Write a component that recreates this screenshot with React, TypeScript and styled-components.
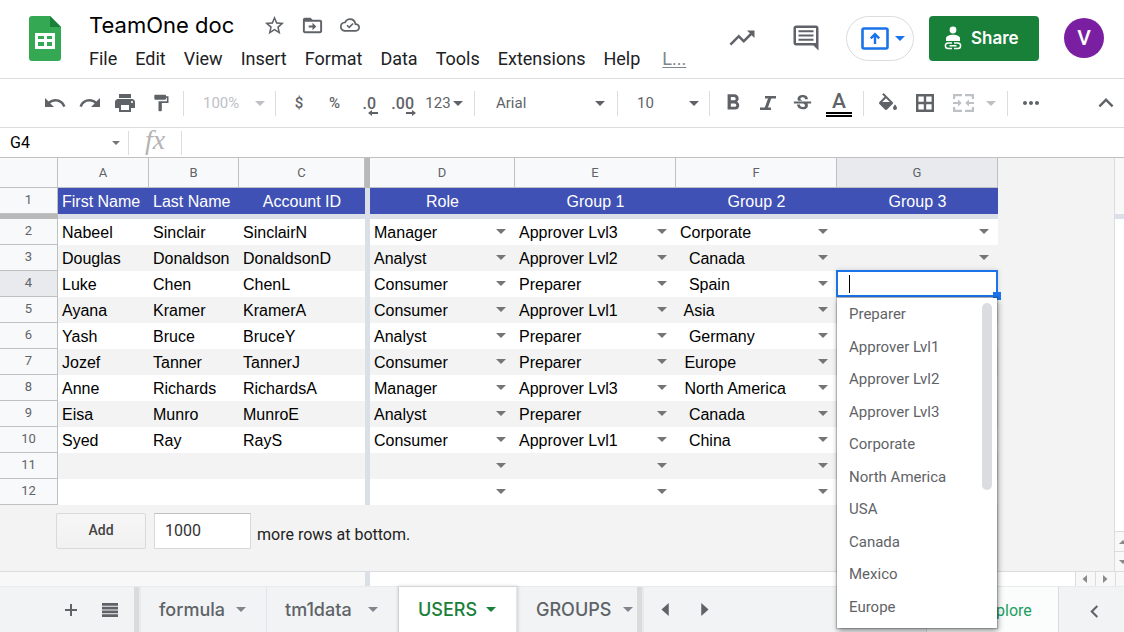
import React from 'react';
import styled, { createGlobalStyle } from 'styled-components';
import {
  MdUndo, MdRedo, MdPrint, MdFormatPaint, MdStarBorder, MdFormatBold, MdStrikethroughS,
  MdBorderAll, MdMoreHoriz, MdExpandLess, MdChevronLeft, MdTrendingUp, MdExplore,
} from 'react-icons/md';

const roboto = "Roboto, 'Liberation Sans', sans-serif";
const brand = "Inter, Roboto, sans-serif";
const cellFont = "'Liberation Sans', Arial, sans-serif";
const grey = '#5f6368';
const line = '#dadce0';
const gridLine = '#c0c0c0';
const freeze = '#dadfe8';

const GlobalStyle = createGlobalStyle`
  * { box-sizing: border-box; }
  body { margin: 0; background: #fff; font-family: ${roboto}; color: #202124; }
  button, input, select { font-family: inherit; color: inherit; border: 0; padding: 0; margin: 0; background: none; outline: none; }
  svg { display: block; flex: none; }
`;

const Page = styled.div`
  min-height: 100vh;
  display: flex;
  flex-direction: column;
  overflow: hidden;
`;

const Triangle = styled.span<{ $size?: number; $color?: string }>`
  flex: none;
  width: 0;
  height: 0;
  border: ${p => p.$size ?? 5}px solid transparent;
  border-top-color: ${p => p.$color ?? grey};
  border-bottom: 0;
`;

/* Header */
const Header = styled.header`
  display: flex;
  height: 79px;
  padding: 0 20px 0 29px;
  border-bottom: 1px solid ${line};
`;
const Logo = styled.a`
  margin: 16px 28px 0 0;
`;
const TitleBlock = styled.div`
  flex: 1;
  padding-top: 10px;
  min-width: 0;
`;
const TitleRow = styled.div`
  display: flex;
  align-items: center;
  height: 30px;
`;
const DocTitle = styled.h1`
  margin: 0 21px 0 0;
  font: 400 22px/30px ${brand};
  color: #000;
  white-space: nowrap;
`;
const TitleButton = styled.button`
  width: 38px;
  height: 30px;
  display: grid;
  place-items: center;
  color: ${grey};
`;
const MenuRow = styled.nav`
  display: flex;
  gap: 18px;
  align-items: center;
  padding-top: 7px;
`;
const MenuButton = styled.button`
  font-size: 18px;
  line-height: 24px;
`;
const LastEdit = styled.a`
  margin-left: 4px;
  font-size: 18px;
  line-height: 24px;
  color: #80868b;
  text-decoration: underline;
  text-underline-offset: 2px;
`;
const HeaderActions = styled.div`
  display: flex;
  align-items: center;
  height: 76px;
`;
const HeaderIcon = styled.button`
  width: 64px;
  height: 40px;
  display: grid;
  place-items: center;
  color: ${grey};
`;
const Present = styled.button`
  display: flex;
  align-items: center;
  gap: 6px;
  width: 68px;
  height: 45px;
  margin: 0 15px 0 8px;
  padding-left: 14px;
  border: 1px solid ${line};
  border-radius: 23px;
`;
const Share = styled.button`
  display: flex;
  align-items: center;
  gap: 9px;
  width: 110px;
  height: 45px;
  padding-left: 15px;
  border-radius: 4px;
  background: #188038;
  color: #fff;
  font: 600 17px/24px ${brand};
`;
const Avatar = styled.button`
  width: 40px;
  height: 40px;
  margin-left: 25px;
  border-radius: 50%;
  background: #7b1fa2;
  color: #fff;
  font-size: 21px;
  font-weight: 500;
  line-height: 40px;
`;

/* Toolbar */
const Toolbar = styled.div`
  display: flex;
  align-items: center;
  height: 49px;
  padding-left: 37px;
  border-bottom: 1px solid ${line};
  color: ${grey};
  font-size: 15px;
`;
const Separator = styled.span`
  flex: none;
  width: 1px;
  height: 25px;
  margin: 0 5px;
  background: ${line};
`;
const Tool = styled.button<{ $width?: number; $muted?: boolean }>`
  position: relative;
  flex: none;
  display: flex;
  align-items: center;
  justify-content: center;
  width: ${p => p.$width ?? 35}px;
  height: 34px;
  font-size: 15px;
  font-weight: 500;
  color: ${p => (p.$muted ? '#bdc1c6' : 'inherit')};
`;
const FormatTool = styled(Tool)`
  gap: 2px;
  padding-right: 3px;
  font-weight: 400;
`;
const DecimalTool = styled(Tool)`
  justify-content: flex-end;
  padding-right: 8px;
  font-size: 16px;
`;
const PaintTool = styled(Tool)`
  padding-left: 2px;
`;
const MergeTool = styled(Tool)`
  gap: 12px;
  padding-left: 3px;
`;
const DecimalArrow = styled.svg`
  position: absolute;
  right: 6px;
  bottom: 4px;
`;
const ColorLetter = styled.span`
  display: flex;
  flex-direction: column;
  align-items: center;
  width: 26px;
  padding-top: 1px;
  font-size: 21px;
  line-height: 22px;
  &::after {
    content: '';
    width: 26px;
    height: 1px;
    border-top: 2px solid #000;
    border-bottom: 2px solid #000;
  }
`;
const SelectWrap = styled.label<{ $width: number; $muted?: boolean }>`
  flex: none;
  display: flex;
  align-items: center;
  width: ${p => p.$width}px;
  padding: 0 5px 0 14px;
  color: ${p => (p.$muted ? '#bdc1c6' : '#5f6368')};
`;
const FontSelectWrap = styled(SelectWrap)`
  padding: 0 7px 0 16px;
`;
const SelectBox = styled.select`
  flex: 1;
  min-width: 0;
  appearance: none;
  height: 30px;
  font-size: 15px;
`;
const Spacer = styled.span`
  flex: 1;
`;

/* Formula bar */
const FormulaBar = styled.div`
  display: flex;
  align-items: center;
  height: 30px;
  border-bottom: 1px solid ${gridLine};
`;
const NameBox = styled.label`
  display: flex;
  align-items: center;
  width: 129px;
  height: 24px;
  padding: 0 8px 0 10px;
  border-right: 1px solid ${line};
`;
const NameInput = styled.input`
  flex: 1;
  min-width: 0;
  font-size: 16px;
  color: #000;
`;
const Fx = styled.span`
  width: 53px;
  height: 24px;
  border-right: 1px solid ${line};
  text-align: center;
  font: italic 28px/18px 'Liberation Serif', serif;
  color: #b4b4b4;
`;
const FormulaInput = styled.input`
  flex: 1;
  height: 24px;
  padding: 0 8px;
  font-size: 16px;
`;

/* Sheet */
const SheetArea = styled.main`
  flex: 1;
  display: flex;
  background: #f3f3f3;
`;
const GridPane = styled.div`
  flex: 1;
  min-width: 0;
`;
const Grid = styled.table`
  table-layout: fixed;
  width: 998px;
  border-collapse: separate;
  border-spacing: 0;
`;
const Head = styled.th<{ $active?: boolean; $row?: boolean }>`
  padding: ${p => (p.$row ? '0 0 1px' : '0')};
  height: ${p => (p.$row ? 26 : 30)}px;
  border-right: 1px solid ${gridLine};
  border-bottom: 1px solid ${gridLine};
  background: ${p => (p.$active ? '#e8eaed' : '#f8f9fa')};
  color: ${grey};
  font: 400 13px/${p => (p.$row ? 24 : 29)}px ${roboto};
  text-align: center;
`;
const FreezeCell = styled.td<{ $dark?: boolean }>`
  padding: 0;
  height: 5px;
  background: ${p => (p.$dark ? '#b9b9b9' : freeze)};
`;
const TitleCell = styled.td<{ $left?: boolean }>`
  padding: 2px 4px 0;
  height: 26px;
  background: #3f51b5;
  color: #fff;
  font: 16px/24px ${cellFont};
  text-align: ${p => (p.$left ? 'left' : 'center')};
  white-space: nowrap;
`;
const Cell = styled.td<{ $band?: boolean }>`
  position: relative;
  padding: 0;
  height: 26px;
  background: ${p => (p.$band ? '#f3f3f3' : '#fff')};
  color: #000;
  font: 16px/24px ${cellFont};
  white-space: pre;
`;
const CellBody = styled.div`
  display: flex;
  justify-content: space-between;
  height: 26px;
  padding: 2px 9px 0 4px;
`;
const CellMenu = styled.button`
  display: flex;
  align-items: center;
  height: 20px;
`;

/* Cell editor and its list */
const Editor = styled.div`
  position: absolute;
  z-index: 10;
  top: -1px;
  left: -1px;
  right: 0;
  height: 27px;
  display: flex;
  align-items: center;
  padding-left: 11px;
  border: 2px solid #1a73e8;
  background: #fff;
  box-shadow: 0 0 5px rgba(0, 0, 0, 0.15);
`;
const Caret = styled.span`
  width: 1px;
  height: 18px;
  background: #000;
`;
const EditorInput = styled.input`
  flex: 1;
  min-width: 0;
  font-size: 16px;
`;
const FillHandle = styled.span`
  position: absolute;
  right: -5px;
  bottom: -5px;
  width: 8px;
  height: 8px;
  background: #1a73e8;
`;
const Popup = styled.div`
  position: absolute;
  z-index: 11;
  top: 27px;
  left: 0;
  right: 1px;
  display: flex;
  padding: 0 5px 5px 0;
  background: #fff;
  box-shadow: 0 0 1px 1px rgba(0, 0, 0, 0.2), 1px 3px 6px rgba(0, 0, 0, 0.4);
`;
const Options = styled.ul`
  flex: 1;
  display: grid;
  grid-auto-rows: 1fr;
  height: 325px;
  margin: 0;
  padding: 0;
  list-style: none;
`;
const Option = styled.li`
  display: flex;
  align-items: center;
  padding-left: 12px;
  color: ${grey};
  font: 15px/20px ${roboto};
`;
const PopupThumb = styled.span`
  width: 10px;
  height: 187px;
  margin-top: 5px;
  border-radius: 5px;
  background: #dadce0;
`;

const AddRows = styled.form`
  display: flex;
  align-items: center;
  gap: 8px;
  padding: 8px 0 22px 56px;
`;
const AddButton = styled.button`
  width: 90px;
  height: 36px;
  padding-bottom: 2px;
  border: 1px solid #d9d9d9;
  border-radius: 2px;
  background: linear-gradient(#f6f6f6, #f1f1f1);
  color: #444;
  font-size: 14px;
  font-weight: 500;
`;
const CountInput = styled.input`
  width: 97px;
  height: 36px;
  padding: 0 0 2px 10px;
  border: 1px solid #d9d9d9;
  border-top-color: #c0c0c0;
  background: #fff;
  font-size: 16px;
  color: #333;
`;
const AddLabel = styled.label`
  margin-left: -2px;
  padding-top: 8px;
  font-size: 16px;
  line-height: 24px;
  color: #222;
`;

/* Scroll bars */
const VScroll = styled.div`
  width: 10px;
  display: flex;
  flex-direction: column;
  border-left: 1px solid ${line};
  background: #fff;
  overflow: hidden;
`;
const VFrozen = styled.span`
  height: 61px;
  background: #f8f8f8;
  border-bottom: 5px solid ${freeze};
`;
const VButton = styled.button`
  display: flex;
  align-items: center;
  justify-content: center;
  width: 15px;
  height: 20px;
  border-top: 1px solid ${line};
  background: #f8f8f8;
  color: #8a8a8a;
`;
const HScroll = styled.div`
  display: flex;
  height: 15px;
  border-top: 1px solid ${line};
  background: #fff;
`;
const HFrozen = styled.span`
  width: 370px;
  background: #f8f8f8;
  border-right: 5px solid ${freeze};
`;
const HButton = styled.button`
  display: grid;
  place-items: center;
  width: 20px;
  padding-right: 2px;
  border-left: 1px solid ${line};
  background: #f8f8f8;
  color: #8a8a8a;
`;
const Corner = styled.span`
  width: 9px;
  border-left: 1px solid ${line};
  background: #f8f8f8;
`;

/* Sheet tabs */
const TabBar = styled.footer`
  display: flex;
  height: 46px;
  border-top: 1px solid #e8eaed;
  background: #f1f3f4;
  color: ${grey};
`;
const TabTools = styled.div`
  display: flex;
  align-items: center;
  width: 134px;
  padding-left: 51px;
`;
const TabTool = styled.button`
  width: 39px;
  height: 45px;
  display: grid;
  place-items: center;
`;
const TabArrows = styled.div`
  display: flex;
  padding-left: 2px;
`;
const TabEdge = styled.span`
  width: 7px;
  background: #dadcdc;
  border-right: 2px solid #e8eaeb;
`;
const Tab = styled.button<{ $active?: boolean; $width: number }>`
  display: flex;
  align-items: center;
  justify-content: space-between;
  width: ${p => p.$width}px;
  padding: 0 20px 0 ${p => (p.$active ? 19 : 18)}px;
  border-right: 1px solid #e3e5e8;
  background: ${p => (p.$active ? '#fff' : 'transparent')};
  box-shadow: ${p => (p.$active ? '0 0 3px 1px rgba(60, 64, 67, 0.2)' : 'none')};
  color: ${p => (p.$active ? '#188038' : grey)};
  font: 500 18px/24px ${brand};
  white-space: nowrap;
`;
const LastTab = styled(Tab)`
  padding-left: 19px;
  padding-right: 4px;
  border-right: 0;
`;
const Explore = styled.button`
  display: flex;
  align-items: center;
  gap: 10px;
  width: 133px;
  padding: 2px 0 0 22px;
  border: 1px solid ${line};
  border-width: 0 1px;
  background: #fbfdfc;
  color: #1e9e62;
  font-size: 16px;
`;
const SideToggle = styled.button`
  display: grid;
  place-items: center;
  width: 65px;
  padding: 4px 0 0 6px;
`;

const SheetsLogo = () => (
  <svg width="32" height="45" viewBox="0 0 32 45">
    <path d="M3 0h18l11 11v31a3 3 0 0 1-3 3H3a3 3 0 0 1-3-3V3a3 3 0 0 1 3-3z" fill="#34a853" />
    <path d="M21 0l11 11H21z" fill="#188038" />
    <path fillRule="evenodd" d="M6 17h20v16H6zM9 20v3h6v-3zM18 20v3h5v-3zM9 26v4h6v-4zM18 26v4h5v-4z" fill="#fff" />
  </svg>
);
const FolderMove = () => (
  <svg width="23" height="23" viewBox="0 0 24 24" fill="currentColor">
    <path d="M20 6h-8l-2-2H4c-1.100 0-2 .9-2 2v12c0 1.100.9 2 2 2h16c1.100 0 2-.9 2-2V8c0-1.100-.9-2-2-2zm0 12H4V8h16v10z" />
    <path d="M12 17l4-4-4-4v3H8v2h4z" />
  </svg>
);
const CloudDone = () => (
  <svg width="20" height="20" viewBox="0 0 24 24" fill="currentColor">
    <path d="M19.350 10.040A7.490 7.490 0 0 0 12 4C9.110 4 6.600 5.640 5.350 8.040A5.994 5.994 0 0 0 0 14c0 3.310 2.690 6 6 6h13c2.760 0 5-2.240 5-5 0-2.640-2.050-4.780-4.650-4.960zM19 18H6c-2.210 0-4-1.790-4-4 0-2.050 1.530-3.760 3.560-3.970l1.070-.11.5-.95A5.469 5.469 0 0 1 12 6c2.620 0 4.880 1.860 5.390 4.430l.3 1.500 1.530.11A2.980 2.980 0 0 1 22 15c0 1.650-1.350 3-3 3z" />
    <path d="M11 16.300l-3.300-3.300 1.400-1.400 1.900 1.900 4-4 1.400 1.400z" />
  </svg>
);
const CommentIcon = () => (
  <svg width="30" height="30" viewBox="0 0 24 24" fill="currentColor">
    <path fillRule="evenodd" d="M4 2h16c1.100 0 2 .9 2 2v18l-4-4H4c-1.100 0-2-.9-2-2V4c0-1.100.9-2 2-2zM4 4v12h16V4zM6 5.800h12v1.600H6zM6 9.200h12v1.600H6zM6 12.600h12v1.600H6z" />
  </svg>
);
const PresentIcon = () => (
  <svg width="28" height="23" viewBox="0 0 28 23">
    <rect x="1.500" y="1.500" width="25" height="20" rx="1.500" fill="none" stroke="#1a73e8" strokeWidth="2.600" />
    <path d="M14 17V8M9.800 11.400L14 7.200l4.200 4.200" fill="none" stroke="#1a73e8" strokeWidth="2.400" />
  </svg>
);
const ShareIcon = () => (
  <svg width="18" height="24" viewBox="0 0 18 24">
    <circle cx="9" cy="4" r="3.400" fill="#fff" />
    <path d="M2 15v-2.500C2 10 5.500 8.800 9 8.800s7 1.200 7 3.700V15z" fill="#fff" />
    <g fill="none" stroke="#fff" strokeWidth="1.500">
      <path d="M8 17H4.200a2.800 2.800 0 0 0 0 5.600H8M10 17h3.800a2.800 2.800 0 0 1 0 5.600H10M5.500 19.800h7" />
    </g>
  </svg>
);
const ItalicIcon = () => (
  <svg width="18" height="18" viewBox="0 0 18 18" fill="none" stroke="currentColor">
    <path d="M6 3.200h11M1 14.800h11" strokeWidth="2.400" />
    <path d="M11.200 3L6.800 15" strokeWidth="3" />
  </svg>
);
const FillIcon = () => (
  <svg width="20" height="20" viewBox="2 0 20 20" fill="currentColor">
    <path d="M16.560 8.940L7.620 0 6.210 1.410l2.380 2.380-5.150 5.150a1.490 1.490 0 0 0 0 2.120l5.500 5.500c.29.29.68.44 1.060.44s.77-.15 1.060-.44l5.500-5.500c.59-.58.59-1.530 0-2.120zM6.200 9L10 5.210 13.800 9H6.200zM19 11.500s-2 2.170-2 3.500c0 1.100.9 2 2 2s2-.9 2-2c0-1.330-2-3.500-2-3.500z" />
  </svg>
);
const BordersIcon = () => (
  <svg width="18" height="18" viewBox="0 0 18 18" fill="none" stroke="currentColor" strokeWidth="2.400">
    <path d="M1.200 1.200h15.600v15.600H1.200zM9 1v16M1 9h16" />
  </svg>
);
const MergeIcon = () => (
  <svg width="21" height="18" viewBox="0 0 21 18" fill="none" stroke="currentColor" strokeWidth="2.200">
    <path d="M1.100 5V1.100H9M12 1.100h7.900V5M1.100 13v3.900H9M12 16.900h7.900V13" />
    <path d="M0 9h6.500M21 9h-6.500" />
    <path d="M5 5.500L8.800 9 5 12.500zM16 5.500L12.200 9l3.800 3.500z" fill="currentColor" stroke="none" />
  </svg>
);
const PlusIcon = () => (
  <svg width="14" height="14" viewBox="0 0 14 14" fill="currentColor">
    <path d="M6 1h2v5h5v2H8v5H6V8H1V6h5z" />
  </svg>
);
const ListIcon = () => (
  <svg width="16" height="14" viewBox="0 0 16 14" fill="currentColor">
    <path d="M0 0h16v2.800H0zM0 3.800h16v2.600H0zM0 7.600h16v2.600H0zM0 11.200h16V14H0z" />
  </svg>
);
const SmallArrow = ({ dir }: { dir: 'left' | 'right' }) => (
  <DecimalArrow width="10" height="6" viewBox="0 0 10 6" fill="currentColor">
    {dir === 'left' ? <path d="M0 3l4-3v2h6v2H4v2z" /> : <path d="M10 3L6 0v2H0v2h6v2z" />}
  </DecimalArrow>
);
const Wedge = ({ d, size = 8 }: { d: string; size?: number }) => (
  <svg width={size} height={size} viewBox="0 0 8 8" fill="currentColor"><path d={d} /></svg>
);
const LEFT = 'M6 0v8L1.500 4z';
const RIGHT = 'M2 0v8L6.500 4z';
const UP = 'M0 6h8L4 2z';
const DOWN = 'M0 2h8L4 6z';

const users: string[][] = [
  ['Nabeel', 'Sinclair', 'SinclairN', 'Manager', 'Approver Lvl3', 'Corporate'],
  ['Douglas', 'Donaldson', 'DonaldsonD', 'Analyst', 'Approver Lvl2', '  Canada'],
  ['Luke', 'Chen', 'ChenL', 'Consumer', 'Preparer', '  Spain'],
  ['Ayana', 'Kramer', 'KramerA', 'Consumer', 'Approver Lvl1', ' Asia'],
  ['Yash', 'Bruce', 'BruceY', 'Analyst', 'Preparer', '  Germany'],
  ['Jozef', 'Tanner', 'TannerJ', 'Consumer', 'Preparer', ' Europe'],
  ['Anne', 'Richards', 'RichardsA', 'Manager', 'Approver Lvl3', ' North America'],
  ['Eisa', 'Munro', 'MunroE', 'Analyst', 'Preparer', '  Canada'],
  ['Syed', 'Ray', 'RayS', 'Consumer', 'Approver Lvl1', '  China'],
  ['', '', '', '', '', ''],
  ['', '', '', '', '', ''],
];
const options = ['Preparer', 'Approver Lvl1', 'Approver Lvl2', 'Approver Lvl3', 'Corporate', 'North America', 'USA', 'Canada', 'Mexico', 'Europe'];
const menus = ['File', 'Edit', 'View', 'Insert', 'Format', 'Data', 'Tools', 'Extensions', 'Help'];
const columnWidths = [58, 91, 90, 126, 5, 145, 161, 161, 161];

const DropCell = ({ value = '', band, label }: { value?: string; band: boolean; label: string }) => (
  <Cell $band={band}>
    <CellBody>
      <span>{value}</span>
      <CellMenu aria-label={label}><Triangle $color="#757575" /></CellMenu>
    </CellBody>
  </Cell>
);

const EditingCell = () => (
  <Cell>
    <Editor>
      <Caret />
      <EditorInput aria-label="Cell G4" />
      <FillHandle />
    </Editor>
    <Popup>
      <Options role="listbox" aria-label="Group 3">
        {options.map(o => <Option role="option" key={o}>{o}</Option>)}
      </Options>
      <PopupThumb />
    </Popup>
  </Cell>
);

const UserRow = ({ cells, index }: { cells: string[]; index: number }) => {
  const n = index + 2;
  const band = index % 2 === 1;
  return (
    <tr>
      <Head $row $active={n === 4} scope="row">{n}</Head>
      {cells.slice(0, 3).map((c, i) => (
        <Cell $band={band} key={i}><CellBody>{c}</CellBody></Cell>
      ))}
      <FreezeCell />
      {cells.slice(3).map((c, i) => (
        <DropCell key={i} value={c} band={band} label={`Choose value for ${'DEF'[i]}${n}`} />
      ))}
      {n === 4 ? <EditingCell /> : <DropCell band={band} label={`Choose value for G${n}`} />}
    </tr>
  );
};

export default function App() {
  return (
    <Page>
      <GlobalStyle />
      <Header>
        <Logo href="#" aria-label="Sheets home"><SheetsLogo /></Logo>
        <TitleBlock>
          <TitleRow>
            <DocTitle>TeamOne doc</DocTitle>
            <TitleButton aria-label="Star"><MdStarBorder size={23} /></TitleButton>
            <TitleButton aria-label="Move"><FolderMove /></TitleButton>
            <TitleButton aria-label="Document status"><CloudDone /></TitleButton>
          </TitleRow>
          <MenuRow>
            {menus.map(m => <MenuButton key={m}>{m}</MenuButton>)}
            <LastEdit href="#">L...</LastEdit>
          </MenuRow>
        </TitleBlock>
        <HeaderActions>
          <HeaderIcon aria-label="Activity"><MdTrendingUp size={30} /></HeaderIcon>
          <HeaderIcon aria-label="Comments"><CommentIcon /></HeaderIcon>
          <Present aria-label="Present"><PresentIcon /><Triangle $color="#1a73e8" /></Present>
          <Share><ShareIcon />Share</Share>
          <Avatar aria-label="Account">V</Avatar>
        </HeaderActions>
      </Header>

      <Toolbar>
        <Tool aria-label="Undo"><MdUndo size={24} /></Tool>
        <Tool aria-label="Redo"><MdRedo size={24} /></Tool>
        <Tool aria-label="Print"><MdPrint size={24} /></Tool>
        <PaintTool $width={36} aria-label="Paint format"><MdFormatPaint size={20} /></PaintTool>
        <Separator />
        <SelectWrap $width={81} $muted>
          <SelectBox aria-label="Zoom" defaultValue="100%"><option>100%</option></SelectBox>
          <Triangle $color="#bdc1c6" />
        </SelectWrap>
        <Separator />
        <Tool $width={36}>$</Tool>
        <Tool>%</Tool>
        <DecimalTool $width={32}>.0<SmallArrow dir="left" /></DecimalTool>
        <DecimalTool $width={38}>.00<SmallArrow dir="right" /></DecimalTool>
        <FormatTool $width={47}>123<Triangle /></FormatTool>
        <Separator />
        <FontSelectWrap $width={132}>
          <SelectBox aria-label="Font" defaultValue="Arial"><option>Arial</option></SelectBox>
          <Triangle />
        </FontSelectWrap>
        <Separator />
        <SelectWrap $width={81}>
          <SelectBox aria-label="Font size" defaultValue="10"><option>10</option></SelectBox>
          <Triangle />
        </SelectWrap>
        <Separator />
        <Tool aria-label="Bold"><MdFormatBold size={26} /></Tool>
        <Tool aria-label="Italic"><ItalicIcon /></Tool>
        <Tool aria-label="Strikethrough"><MdStrikethroughS size={23} /></Tool>
        <Tool $width={38} aria-label="Text color"><ColorLetter>A</ColorLetter></Tool>
        <Separator />
        <Tool $width={37} aria-label="Fill color"><FillIcon /></Tool>
        <Tool $width={37} aria-label="Borders"><BordersIcon /></Tool>
        <MergeTool $width={59} $muted aria-label="Merge cells"><MergeIcon /><Triangle $color="#bdc1c6" /></MergeTool>
        <Separator />
        <Tool aria-label="More"><MdMoreHoriz size={24} /></Tool>
        <Spacer />
        <Tool $width={36} aria-label="Hide the menus"><MdExpandLess size={30} /></Tool>
      </Toolbar>

      <FormulaBar>
        <NameBox>
          <NameInput aria-label="Name box" defaultValue="G4" />
          <Triangle $size={4} $color="#757575" />
        </NameBox>
        <Fx>fx</Fx>
        <FormulaInput aria-label="Formula" />
      </FormulaBar>

      <SheetArea>
        <GridPane>
          <Grid>
            <colgroup>{columnWidths.map((w, i) => <col key={i} width={w} />)}</colgroup>
            <thead>
              <tr>
                <Head aria-label="Select all" />
                <Head>A</Head><Head>B</Head><Head>C</Head>
                <FreezeCell $dark />
                <Head>D</Head><Head>E</Head><Head>F</Head><Head $active>G</Head>
              </tr>
            </thead>
            <tbody>
              <tr>
                <Head $row scope="row">1</Head>
                <TitleCell $left>First Name</TitleCell>
                <TitleCell $left>Last Name</TitleCell>
                <TitleCell>Account ID</TitleCell>
                <FreezeCell />
                <TitleCell>Role</TitleCell>
                <TitleCell>Group 1</TitleCell>
                <TitleCell>Group 2</TitleCell>
                <TitleCell>Group 3</TitleCell>
              </tr>
              <tr aria-hidden="true">
                <FreezeCell $dark />
                <FreezeCell colSpan={8} />
              </tr>
              {users.map((cells, i) => <UserRow key={i} cells={cells} index={i} />)}
            </tbody>
          </Grid>
          <AddRows onSubmit={e => e.preventDefault()}>
            <AddButton type="button">Add</AddButton>
            <CountInput id="row-count" defaultValue="1000" />
            <AddLabel htmlFor="row-count">more rows at bottom.</AddLabel>
          </AddRows>
        </GridPane>
        <VScroll>
          <VFrozen />
          <Spacer />
          <VButton aria-label="Scroll up"><Wedge d={UP} /></VButton>
          <VButton aria-label="Scroll down"><Wedge d={DOWN} /></VButton>
        </VScroll>
      </SheetArea>

      <HScroll>
        <HFrozen />
        <Spacer />
        <HButton aria-label="Scroll left"><Wedge d={LEFT} /></HButton>
        <HButton aria-label="Scroll right"><Wedge d={RIGHT} /></HButton>
        <Corner />
      </HScroll>

      <TabBar>
        <TabTools>
          <TabTool aria-label="Add sheet"><PlusIcon /></TabTool>
          <TabTool aria-label="All sheets"><ListIcon /></TabTool>
        </TabTools>
        <TabEdge />
        <Tab $width={126}>formula<Triangle $color="#80868b" /></Tab>
        <Tab $width={132}>tm1data<Triangle $color="#80868b" /></Tab>
        <Tab $width={118} $active>USERS<Triangle $color="#188038" /></Tab>
        <LastTab $width={120}>GROUPS<Triangle $color="#80868b" /></LastTab>
        <TabEdge />
        <TabArrows>
          <TabTool aria-label="Previous sheets"><Wedge d={LEFT} size={13} /></TabTool>
          <TabTool aria-label="Next sheets"><Wedge d={RIGHT} size={13} /></TabTool>
        </TabArrows>
        <Spacer />
        <Explore><MdExplore size={20} />Explore</Explore>
        <SideToggle aria-label="Show side panel"><MdChevronLeft size={25} /></SideToggle>
      </TabBar>
    </Page>
  );
}
